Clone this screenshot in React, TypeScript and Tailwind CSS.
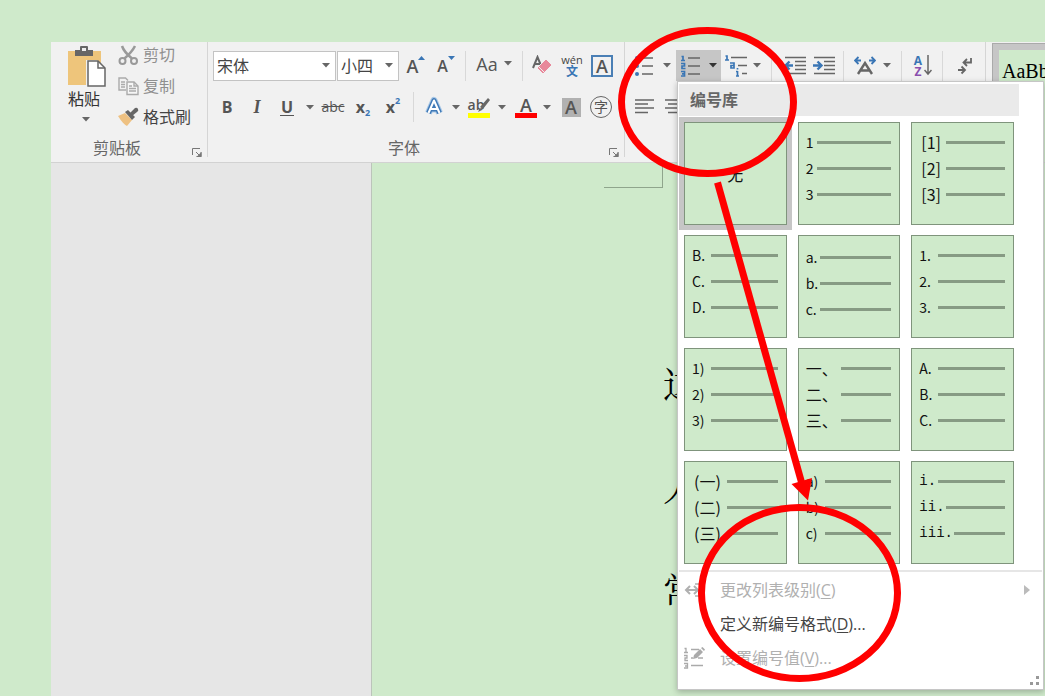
import type { ReactNode } from "react";

type Row = { label: string; width: string };
type Format = { name: string; rows: Row[]; style?: string };

const rows = (labels: string[], width: string): Row[] =>
  labels.map((label) => ({ label, width }));

const formats: Format[] = [
  { name: "无", rows: [] },
  { name: "1 2 3", rows: rows(["1", "2", "3"], "w-[11px]") },
  { name: "[1] [2] [3]", rows: rows(["[1]", "[2]", "[3]"], "w-[27px] pl-0.5"), style: "pt-1.5 text-base" },
  { name: "B. C. D.", rows: rows(["B.", "C.", "D."], "w-[19px]") },
  { name: "a. b. c.", rows: rows(["a.", "b.", "c."], "w-[14px]"), style: "pt-2 text-sm" },
  { name: "1. 2. 3.", rows: rows(["1.", "2.", "3."], "w-[19px]") },
  { name: "1) 2) 3)", rows: rows(["1)", "2)", "3)"], "w-[19px]") },
  { name: "一、二、三、", rows: rows(["一、", "二、", "三、"], "w-[35px]"), style: "pt-1.5 text-base" },
  { name: "A. B. C.", rows: rows(["A.", "B.", "C."], "w-[19px]") },
  {
    name: "(一) (二) (三)",
    rows: rows(["(一)", "(二)", "(三)"], "w-[35px] pl-0.5"),
    style: "pt-1.5 text-base",
  },
  { name: "a) b) c)", rows: rows(["a)", "b)", "c)"], "w-[19px]") },
  {
    name: "i. ii. iii.",
    rows: [
      { label: "i.", width: "w-[19px]" },
      { label: "ii.", width: "w-[27px]" },
      { label: "iii.", width: "w-[35px]" },
    ],
    style: "pt-1.5 text-sm font-['Liberation_Mono',monospace]",
  },
];

function Caret({ className = "text-[#666]" }: { className?: string }) {
  return (
    <svg width="8" height="5" viewBox="0 0 8 5" className={`shrink-0 ${className}`} aria-hidden="true">
      <path d="M0 0h8L4 4.500z" fill="currentColor" />
    </svg>
  );
}

function Tool({
  label,
  width = "w-[30px]",
  children,
}: {
  label: string;
  width?: string;
  children: ReactNode;
}) {
  return (
    <button
      type="button"
      aria-label={label}
      title={label}
      className={`flex h-[30px] shrink-0 items-center justify-center ${width}`}
    >
      {children}
    </button>
  );
}

function DropButton({ label }: { label: string }) {
  return (
    <Tool label={label} width="w-3">
      <Caret />
    </Tool>
  );
}

function Separator({ className = "mx-1" }: { className?: string }) {
  return <div className={`h-[30px] w-px shrink-0 bg-[#d8d8d8] ${className}`} />;
}

function Group({
  title,
  width,
  children,
}: {
  title?: string;
  width: string;
  children: ReactNode;
}) {
  return (
    <section className={`flex shrink-0 ${width}`}>
      <div className="flex min-w-0 flex-1 flex-col justify-between pb-0.5">
        {children}
        {title && (
          <footer className="flex h-6 items-center pr-1 text-[#666]">
            <span className="flex-1 pr-2 text-center text-base leading-6">{title}</span>
            <button type="button" aria-label={`${title}设置`} className="mt-2">
              <svg width="12" height="11" viewBox="0 0 12 11" fill="none" stroke="#777" aria-hidden="true">
                <path d="M1.500 8V1.500H9M5 5l4 4M10 5v4.500H5.500" />
                <path d="M10.500 5v5h-5z" fill="#777" stroke="none" />
              </svg>
            </button>
          </footer>
        )}
      </div>
      <div className="h-[115px] w-px bg-[#d5d5d5]" />
    </section>
  );
}

function Clipboard() {
  return (
    <Group title="剪贴板" width="w-[157px]">
      <div className="flex pl-[15px]">
        <button type="button" className="flex w-10 flex-col items-start pt-[3px] text-base leading-6 text-[#333]">
          <svg width="40" height="42" viewBox="0 0 40 42" aria-hidden="true">
            <path d="M2 6h33v34H2z" fill="#eec57b" />
            <path d="M9 5h5V2q0-1 1-1h6q1 0 1 1v3h5v6H9z" fill="#666" />
            <path d="M16 3h4v3h-4z" fill="#eee" />
            <path d="M20 15h11l9 8v19H20z" fill="#f1f1f1" />
            <path d="M22 16h10l7 7v18H22z" fill="#fff" stroke="#666" strokeWidth="1.500" />
            <path d="M32 16v7h7" fill="none" stroke="#666" strokeWidth="1.500" />
          </svg>
          <span className="pl-0.5">粘贴</span>
          <span className="flex h-4 w-10 items-center justify-center">
            <Caret />
          </span>
        </button>
        <div className="ml-3 flex flex-col text-base text-[#8f8f8f]">
          <button type="button" className="flex h-[31px] items-center gap-1 pb-1.5">
            <svg width="21" height="22" viewBox="0 0 21 22" fill="none" stroke="#999" strokeWidth="2" aria-hidden="true">
              <circle cx="4.500" cy="17" r="3" />
              <circle cx="16" cy="17" r="3" />
              <path d="M4 2q2 6 10 12.500M17 2q-3 6-10.500 12.500" strokeWidth="2.500" />
            </svg>
            剪切
          </button>
          <button type="button" className="flex h-[31px] items-center gap-1 pb-1.5">
            <svg width="21" height="20" viewBox="0 0 21 20" fill="none" stroke="#aaa" strokeWidth="1.400" aria-hidden="true">
              <path d="M8 14H1V2h6.500L10 4.500M3 6h4M3 8.500h4M3 11h4" />
              <path d="M9 6h7l4 4v8.500H9z" fill="#f6f6f6" />
              <path d="M16 6v4h4M11 10h3M11 12.500h7M11 15h7" />
            </svg>
            复制
          </button>
          <button type="button" className="flex h-[31px] items-center gap-1 pb-1.5 text-[#444]">
            <svg width="21" height="20" viewBox="0 0 21 20" aria-hidden="true">
              <path d="M0 9l7-3 7 7-5 6q-4-2-9-10z" fill="#eec182" />
              <path d="M7 5l3-2 7 7-3 3z" fill="#666" />
              <path d="M12 6l5-5q2-1 3 1t-1 3l-5 4z" fill="#666" />
            </svg>
            格式刷
          </button>
        </div>
      </div>
    </Group>
  );
}

function FontSelect({ label, value, width }: { label: string; value: string; width: string }) {
  return (
    <label className={`relative ${width}`}>
      <span className="sr-only">{label}</span>
      <select className="h-[30px] w-full appearance-none border border-[#c3c3c3] bg-white pl-[3px] text-base leading-7 text-[#444]">
        <option>{value}</option>
      </select>
      <span className="pointer-events-none absolute inset-y-0 right-[6px] flex items-center">
        <Caret />
      </span>
    </label>
  );
}

function FontGroup() {
  return (
    <Group title="字体" width="w-[417px]">
      <div className="flex flex-col gap-[11px] pt-2 text-[#555]">
        <div className="flex h-[31px] items-center pl-[5px]">
          <FontSelect label="字体" value="宋体" width="mr-px w-[123px]" />
          <FontSelect label="字号" value="小四" width="mr-0.5 w-[62px]" />
          <Tool label="增大字号">
            <span className="text-lg font-semibold leading-6">A</span>
            <svg width="7" height="4" viewBox="0 0 7 4" className="mb-4" aria-hidden="true">
              <path d="M0 4l3.500-4L7 4z" fill="#3a76b5" />
            </svg>
          </Tool>
          <Tool label="减小字号">
            <span className="text-base font-semibold leading-6">A</span>
            <svg width="7" height="4" viewBox="0 0 7 4" className="mb-4" aria-hidden="true">
              <path d="M0 0h7L3.500 4z" fill="#3a76b5" />
            </svg>
          </Tool>
          <Separator />
          <Tool label="更改大小写" width="w-12 gap-1.5 pb-1">
            <span className="text-lg font-medium leading-6">Aa</span>
            <Caret />
          </Tool>
          <Separator />
          <Tool label="清除所有格式">
            <svg width="22" height="22" viewBox="0 0 22 22" aria-hidden="true">
              <path d="M2 13L6.500 2 11 13M3.500 9h6" fill="none" stroke="#666" strokeWidth="2" />
              <path d="M15 4l6 6-9 9-6-6z" fill="#e8899b" stroke="#f1f1f1" />
              <path d="M8 12l5 5" stroke="#f1f1f1" />
            </svg>
          </Tool>
          <Tool label="拼音指南" width="w-[30px] flex-col">
            <span className="text-[11px] leading-3 text-[#444]">wén</span>
            <span className="text-xs font-bold leading-3 text-[#3a76b5]">文</span>
          </Tool>
          <Tool label="字符边框">
            <span className="flex h-[22px] w-[22px] items-center justify-center border-2 border-[#4a7fb5] text-lg font-semibold leading-5">
              A
            </span>
          </Tool>
        </div>
        <div className="flex items-center pl-1">
          <Tool label="加粗">
            <b className="text-base leading-6">B</b>
          </Tool>
          <Tool label="倾斜">
            <i className="font-['Liberation_Serif',serif] text-lg font-bold leading-6">I</i>
          </Tool>
          <Tool label="下划线">
            <span className="border-b border-[#555] px-px text-base font-bold leading-4">U</span>
          </Tool>
          <Tool label="下划线选项" width="w-4">
            <Caret />
          </Tool>
          <Tool label="删除线">
            <s className="text-sm font-medium leading-6">abc</s>
          </Tool>
          <Tool label="下标">
            <span className="text-base font-bold leading-6">x</span>
            <span className="mt-3 text-[9px] font-bold leading-3 text-[#3a76b5]">2</span>
          </Tool>
          <Tool label="上标">
            <span className="text-base font-bold leading-6">x</span>
            <span className="mb-3 text-[9px] font-bold leading-3 text-[#3a76b5]">2</span>
          </Tool>
          <Separator className="ml-[5px] mr-1" />
          <Tool label="文本效果和版式" width="w-8">
            <svg width="20" height="22" viewBox="0 0 20 22" fill="none" strokeLinejoin="round" aria-hidden="true">
              <path d="M4.500 17L10 4.500 15.500 17M6.500 13h7" stroke="#a9c8e6" strokeWidth="7" />
              <path d="M4.500 17L10 4.500 15.500 17M6.500 13h7" stroke="#3f79b7" strokeWidth="5" />
              <path d="M4.500 17L10 4.500 15.500 17M6.500 13h7" stroke="#fff" strokeWidth="2" />
            </svg>
          </Tool>
          <DropButton label="文本效果选项" />
          <Tool label="突出显示" width="w-[34px] flex-col">
            <span className="flex h-4 items-center text-sm font-semibold leading-4">
              ab
              <svg width="12" height="16" viewBox="0 0 12 16" className="-ml-1.5" aria-hidden="true">
                <path d="M10 1l2 2-7 9-3-2zM2 11l2 2-4 2z" fill="#666" />
              </svg>
            </span>
            <span className="h-[5px] w-[22px] bg-[#ffff00]" />
          </Tool>
          <DropButton label="突出显示颜色" />
          <div className="w-[3px]" />
          <Tool label="字体颜色" width="w-[30px] flex-col">
            <span className="text-lg font-semibold leading-4">A</span>
            <span className="h-[5px] w-[22px] bg-[#ff0000]" />
          </Tool>
          <DropButton label="字体颜色选项" />
          <div className="w-[3px]" />
          <Tool label="字符底纹">
            <span className="flex h-[19px] w-[19px] items-center justify-center bg-[#b1b1b1] text-lg font-semibold leading-5">
              A
            </span>
          </Tool>
          <Tool label="带圈字符">
            <span className="flex h-[22px] w-[22px] items-center justify-center rounded-full border border-[#666] text-sm leading-4">
              字
            </span>
          </Tool>
        </div>
      </div>
    </Group>
  );
}

function NumberedLines() {
  return (
    <svg width="20" height="22" viewBox="0 0 20 22" fill="none" className="shrink-0" aria-hidden="true">
      <path
        d="M0.500 1.500h1.500v4M0 5.500h4M0 8.500h3.500v2.500H1v2.500h3.500M0 16.500h3.500v4.500H0M1 18.800h2.500"
        stroke="#3a76b5"
        strokeWidth="1.700"
      />
      <path d="M7 3h12M7 11h12M7 19h12" stroke="#666" strokeWidth="1.700" />
    </svg>
  );
}

function IndentIcon({ arrow }: { arrow: string }) {
  return (
    <svg width="23" height="20" viewBox="0 0 23 20" fill="none" aria-hidden="true">
      <path d="M1 1.500h21M11 5.500h11M11 9.500h11M11 13.500h11M1 17.500h21" stroke="#666" strokeWidth="1.400" />
      <path d={arrow} stroke="#3a76b5" strokeWidth="2.400" />
    </svg>
  );
}

function ParagraphGroup() {
  return (
    <Group width="w-[361px]">
      <div className="flex flex-col gap-[11px] pt-2">
        <div className="flex h-[31px] items-center pl-[3px]">
          <Tool label="项目符号" width="w-8">
            <svg width="20" height="20" viewBox="0 0 20 20" aria-hidden="true">
              <g fill="#3a76b5">
                <circle cx="3" cy="2" r="2" />
                <circle cx="3" cy="10" r="2" />
                <circle cx="3" cy="18" r="2" />
              </g>
              <path d="M8 2h11M8 10h11M8 18h11" stroke="#666" strokeWidth="1.500" />
            </svg>
          </Tool>
          <Tool label="项目符号选项" width="mr-0.5 w-3.5">
            <Caret />
          </Tool>
          <div className="relative">
            <button
              type="button"
              aria-label="编号"
              aria-expanded="true"
              className="flex h-[31px] w-[45px] items-center justify-center gap-2 bg-[#c6c6c6]"
            >
              <NumberedLines />
              <Caret className="text-[#333]" />
            </button>
            <NumberingMenu />
          </div>
          <Tool label="多级列表">
            <svg width="22" height="22" viewBox="0 0 22 22" fill="none" aria-hidden="true">
              <path
                d="M0.500 1h1.500v4M0 5h4M5 8h4v5H6v-2.500h3M12.500 16v5M11 16.500h1.500M11 21h3M12.500 13v1.500"
                stroke="#3a76b5"
                strokeWidth="1.700"
              />
              <path d="M6 2.500h16M13 10.500h9M17 18.500h5" stroke="#666" strokeWidth="1.500" />
            </svg>
          </Tool>
          <DropButton label="多级列表选项" />
          <Separator className="mx-2" />
          <Tool label="减少缩进量">
            <IndentIcon arrow="M9 9.500H2M5.500 5.500l-4 4 4 4" />
          </Tool>
          <Tool label="增加缩进量" width="w-7">
            <IndentIcon arrow="M0 9.500h8M4.500 5.500l4 4-4 4" />
          </Tool>
          <Separator className="mx-[5px]" />
          <Tool label="中文版式" width="w-8">
            <svg width="22" height="20" viewBox="0 0 22 20" fill="none" aria-hidden="true">
              <path d="M4 18L11 7l7 11M7 14.500h8" stroke="#666" strokeWidth="2.400" />
              <path
                d="M7 4.500H1.500M4.500 1L1 4.500 4.500 8M15 4.500h5.500M17.500 1L21 4.500 17.500 8"
                stroke="#3a76b5"
                strokeWidth="1.800"
              />
            </svg>
          </Tool>
          <DropButton label="中文版式选项" />
          <Separator className="mx-2" />
          <Tool label="排序" width="w-6">
            <span className="flex w-3 flex-col text-xs font-bold leading-[11px]">
              <span className="text-[#3a76b5]">A</span>
              <span className="text-[#8a4fae]">Z</span>
            </span>
            <svg width="8" height="21" viewBox="0 0 8 21" fill="none" stroke="#666" strokeWidth="1.500" aria-hidden="true">
              <path d="M4 0v19M0.500 15L4 19l3.500-4" />
            </svg>
          </Tool>
          <Separator className="mx-2" />
          <Tool label="显示编辑标记" width="w-7">
            <svg width="16" height="18" viewBox="0 0 16 18" fill="none" stroke="#666" strokeWidth="1.800" aria-hidden="true">
              <path d="M14 1v4.500H7M10 2L6.500 5.500 10 9M1 13h6M4.500 9.500L8 13l-3.500 3.500" />
            </svg>
          </Tool>
        </div>
        <div className="flex items-center pl-[5px]">
          <Tool label="左对齐">
            <svg width="20" height="16" viewBox="0 0 20 16" stroke="#666" strokeWidth="1.500" aria-hidden="true">
              <path d="M0 1h19M0 5h13M0 9h19M0 13.500h13" />
            </svg>
          </Tool>
          <Tool label="居中">
            <svg width="20" height="16" viewBox="0 0 20 16" stroke="#666" strokeWidth="1.500" aria-hidden="true">
              <path d="M0 1h19M3 5h13M0 9h19M3 13.500h13" />
            </svg>
          </Tool>
        </div>
      </div>
    </Group>
  );
}

function FormatCell({ format, selected }: { format: Format; selected: boolean }) {
  return (
    <button
      type="button"
      aria-label={format.name}
      className={`h-[103px] border border-[#7f947c] bg-[#cfeacb] text-[#111] ${
        selected ? "outline-[5px] outline-[#c6c6c6]" : ""
      }`}
    >
      {format.rows.length === 0 ? (
        <span className="text-base">{format.name}</span>
      ) : (
        <span className={`flex h-full flex-col pl-[7px] pr-2 text-left ${format.style ?? "pt-1.5 text-sm"}`}>
          {format.rows.map((row) => (
            <span key={row.label} className="flex h-[26px] items-center">
              <span className={`shrink-0 whitespace-nowrap leading-6 ${row.width}`}>{row.label}</span>
              <span className="h-[3px] flex-1 bg-[#879b84]" />
            </span>
          ))}
        </span>
      )}
    </button>
  );
}

function MenuItem({
  icon,
  text,
  hotkey,
  suffix = "",
  disabled = false,
  submenu = false,
}: {
  icon?: ReactNode;
  text: string;
  hotkey: string;
  suffix?: string;
  disabled?: boolean;
  submenu?: boolean;
}) {
  return (
    <li>
      <button
        type="button"
        disabled={disabled}
        className="flex h-[34px] w-full items-center pl-[5px] pr-3 text-left text-base text-[#444] disabled:text-[#b0b0b0]"
      >
        <span className="w-9">{icon}</span>
        <span className="flex-1">
          {text}(<u className="underline-offset-2">{hotkey}</u>){suffix}
        </span>
        {submenu && (
          <svg width="6" height="10" viewBox="0 0 6 10" aria-hidden="true">
            <path d="M0 0l6 5-6 5z" fill="#bbb" />
          </svg>
        )}
      </button>
    </li>
  );
}

function NumberingMenu() {
  return (
    <div className="absolute left-px top-full z-10 w-[367px] border border-[#c6c6c6] bg-white pt-0.5 font-['Noto_Sans_CJK_SC',sans-serif] shadow-[0_2px_6px_rgba(0,0,0,0.25)]">
      <h2 className="ml-px mr-6 h-8 bg-[#eaeaea] pl-[11px] text-base font-bold leading-[30px] text-[#666]">
        编号库
      </h2>
      <div className="ml-1.5 mr-[29px] mt-1.5 grid grid-cols-3 gap-x-[11px] gap-y-[10px]">
        {formats.map((format, i) => (
          <FormatCell key={format.name} format={format} selected={i === 0} />
        ))}
      </div>
      <ul className="mx-px mt-1.5 border-t-2 border-[#e6e6e6] pt-px font-['Open_Sans','Noto_Sans_CJK_SC',sans-serif]">
        <MenuItem
          icon={
            <svg width="22" height="16" viewBox="0 0 22 16" fill="none" stroke="#b0b0b0" strokeWidth="2" aria-hidden="true">
              <path d="M2 8h12M6 4L2 8l4 4M10 4l4 4-4 4" />
              <path d="M11 2h10M16 8h5M11 14h10" strokeWidth="1.500" />
            </svg>
          }
          text="更改列表级别"
          hotkey="C"
          disabled
          submenu
        />
        <MenuItem text="定义新编号格式" hotkey="D" suffix="..." />
        <MenuItem
          icon={
            <svg width="22" height="22" viewBox="0 0 22 22" fill="none" stroke="#aaa" aria-hidden="true">
              <path
                d="M0.500 1.500h1.500v4M0 5.500h4M0 8.500h3v2.500H1v2.500h3M0 16.500h3.500v4.500H0M1 19h2.500M7 2.500h8M7 11h2M14 11h5M7 18.500h12"
                strokeWidth="1.300"
              />
              <path d="M9 12l1-4 6-6 3 3-6 6zM17 1l1.500-1L21 2.500 20 4z" fill="#aaa" stroke="none" />
            </svg>
          }
          text="设置编号值"
          hotkey="V"
          suffix="..."
          disabled
        />
      </ul>
      <div className="flex h-[14px] items-end justify-end pb-1 pr-1">
        <svg width="9" height="9" viewBox="0 0 9 9" fill="#999" aria-hidden="true">
          <path d="M6 0h3v3H6zM0 6h3v3H0zM6 6h3v3H6z" />
        </svg>
      </div>
    </div>
  );
}

function Annotations() {
  return (
    <svg
      className="pointer-events-none absolute left-0 top-0 z-20"
      width="1045"
      height="696"
      viewBox="0 0 1045 696"
      fill="none"
      stroke="#ff0000"
      strokeWidth="7"
      aria-hidden="true"
    >
      <ellipse cx="707.500" cy="102" rx="86" ry="71.500" />
      <ellipse cx="799.500" cy="593" rx="98" ry="85.500" />
      <path d="M717.500 182.500L802 484" />
      <path d="M791.500 484l20.500-6-4 22.500z" fill="#ff0000" stroke="none" />
    </svg>
  );
}

function App() {
  return (
    <div className="relative flex h-screen flex-col overflow-hidden bg-[#cfeacb] pl-[51px] pt-[42px] font-['Open_Sans','Noto_Sans_CJK_SC',sans-serif]">
      <header className="flex h-[121px] shrink-0 border-b border-[#d2d2d2] bg-[#f1f1f1]">
        <Clipboard />
        <FontGroup />
        <ParagraphGroup />
        <div className="ml-1.5 mt-px flex-1 overflow-hidden border-l border-t border-[#aaa] bg-[#c6c6c6] pl-1.5 pt-1.5">
          <button
            type="button"
            className="h-full w-24 bg-[#cfeacb] pb-[70px] pl-[3px] text-left font-['Liberation_Serif',serif] text-xl text-black"
          >
            AaBb
          </button>
        </div>
      </header>

      <main className="flex flex-1">
        <aside className="w-[321px] shrink-0 border-r border-[#bcc4bb] bg-[#e6e6e6]" />
        <article className="flex-1 overflow-hidden">
          <div className="ml-[232px] h-[25px] w-[59px] border-b border-r border-[#8fa58c]" />
          <div className="ml-[291px] mt-[143px] font-['Noto_Serif_CJK_SC','Noto_Sans_CJK_SC',serif] text-4xl leading-[103px] text-black">
            <p>这</p>
            <p>人</p>
            <p>常</p>
          </div>
        </article>
      </main>

      <Annotations />
    </div>
  );
}

export default App;
